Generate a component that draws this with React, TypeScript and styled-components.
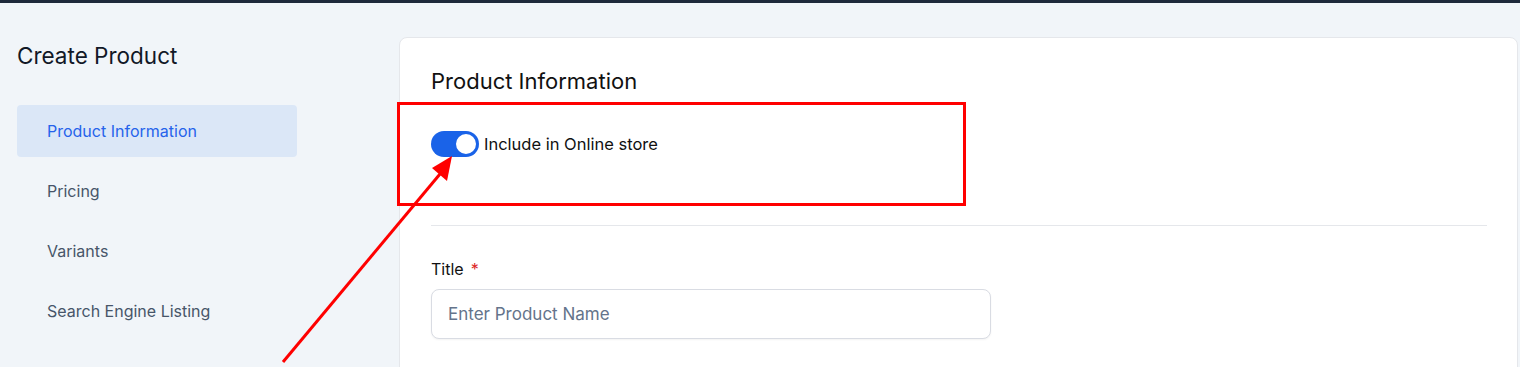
import React from "react";
import styled, { createGlobalStyle } from "styled-components";

const GlobalStyle = createGlobalStyle`
    html, body {
        margin: 0;
        padding: 0;
        background: #f1f5f9;
        font-family: Inter, "Noto Sans", sans-serif;
        overflow: hidden;
    }
`;

const TopBar = styled.div`
    height: 3px;
    background: #1e293b;
`;

const Page = styled.div`
    position: relative;
    display: flex;
    align-items: flex-start;
    padding: 34px 2px 0 17px;
    gap: 102px;
    height: 400px;
`;

const Sidebar = styled.aside`
    width: 280px;
    flex-shrink: 0;
    display: flex;
    flex-direction: column;
`;

const SideTitle = styled.h2`
    margin: 5px 0 36px;
    font-size: 22.5px;
    font-weight: 400;
    color: #111827;
`;

const NavList = styled.nav`
    display: flex;
    flex-direction: column;
    gap: 8px;
`;

const NavItem = styled.div<{ $active?: boolean }>`
    height: 52px;
    display: flex;
    align-items: center;
    padding-left: 30px;
    border-radius: 4px;
    font-size: 16px;
    color: ${(p) => (p.$active ? "#2563eb" : "#475569")};
    background: ${(p) => (p.$active ? "#dbe7f7" : "transparent")};
`;

const Card = styled.section`
    flex: 1;
    background: #ffffff;
    border: 1px solid #e5e7eb;
    border-radius: 8px;
    padding: 30px 30px 0 31px;
    min-height: 400px;
`;

const CardTitle = styled.h3`
    margin: 0 0 36px;
    font-size: 22px;
    font-weight: 420;
    color: #111111;
`;

const ToggleRow = styled.label`
    display: flex;
    align-items: center;
    gap: 5px;
    font-size: 16.5px;
    color: #111111;
    height: 28px;
`;

const Switch = styled.span<{ $on?: boolean }>`
    position: relative;
    width: 48px;
    height: 26px;
    border-radius: 13px;
    background: ${(p) => (p.$on ? "#1a63e8" : "#cbd5e1")};

    &::after {
        content: "";
        position: absolute;
        top: 1px;
        right: 1px;
        width: 20px;
        height: 20px;
        border-radius: 50%;
        background: #ffffff;
        border: 2px solid #1a63e8;
    }
`;

const Divider = styled.hr`
    border: none;
    border-top: 1px solid #e5e7eb;
    margin: 67px 0 0;
`;

const Field = styled.div`
    margin-top: 33px;
    display: flex;
    flex-direction: column;
    gap: 10px;
    width: 560px;
`;

const Label = styled.span`
    font-size: 16px;
    color: #111111;

    em {
        font-style: normal;
        color: #dc2626;
        margin-left: 7px;
    }
`;

const Input = styled.input`
    height: 50px;
    box-sizing: border-box;
    border: 1px solid #d9dce3;
    border-radius: 8px;
    padding: 0 16px;
    font-family: inherit;
    font-size: 17px;
    box-shadow: 0 1px 2px rgba(0, 0, 0, 0.05);

    &::placeholder {
        color: #64748b;
    }
`;

const Highlight = styled.div`
    position: absolute;
    left: 397px;
    top: 99px;
    width: 563px;
    height: 98px;
    border: 3px solid #ff0000;
    pointer-events: none;
`;

const Arrow = styled.svg`
    position: absolute;
    left: 0;
    top: -3px;
    pointer-events: none;
`;

const navItems = ["Product Information", "Pricing", "Variants", "Search Engine Listing"];

export default function App() {
    return (
        <>
            <GlobalStyle />
            <TopBar />
            <Page>
                <Sidebar>
                    <SideTitle>Create Product</SideTitle>
                    <NavList>
                        {navItems.map((item, i) => (
                            <NavItem key={item} $active={i === 0}>
                                {item}
                            </NavItem>
                        ))}
                    </NavList>
                </Sidebar>
                <Card>
                    <CardTitle>Product Information</CardTitle>
                    <ToggleRow>
                        <Switch $on />
                        Include in Online store
                    </ToggleRow>
                    <Divider />
                    <Field>
                        <Label>
                            Title<em>*</em>
                        </Label>
                        <Input placeholder="Enter Product Name" />
                    </Field>
                </Card>
                <Highlight />
                <Arrow width="600" height="370" viewBox="0 0 600 370">
                    <line x1="283" y1="362" x2="440" y2="174" stroke="#ff0000" strokeWidth="3" />
                    <polygon points="452,156 432,168 447,181" fill="#ff0000" />
                </Arrow>
            </Page>
        </>
    );
}
